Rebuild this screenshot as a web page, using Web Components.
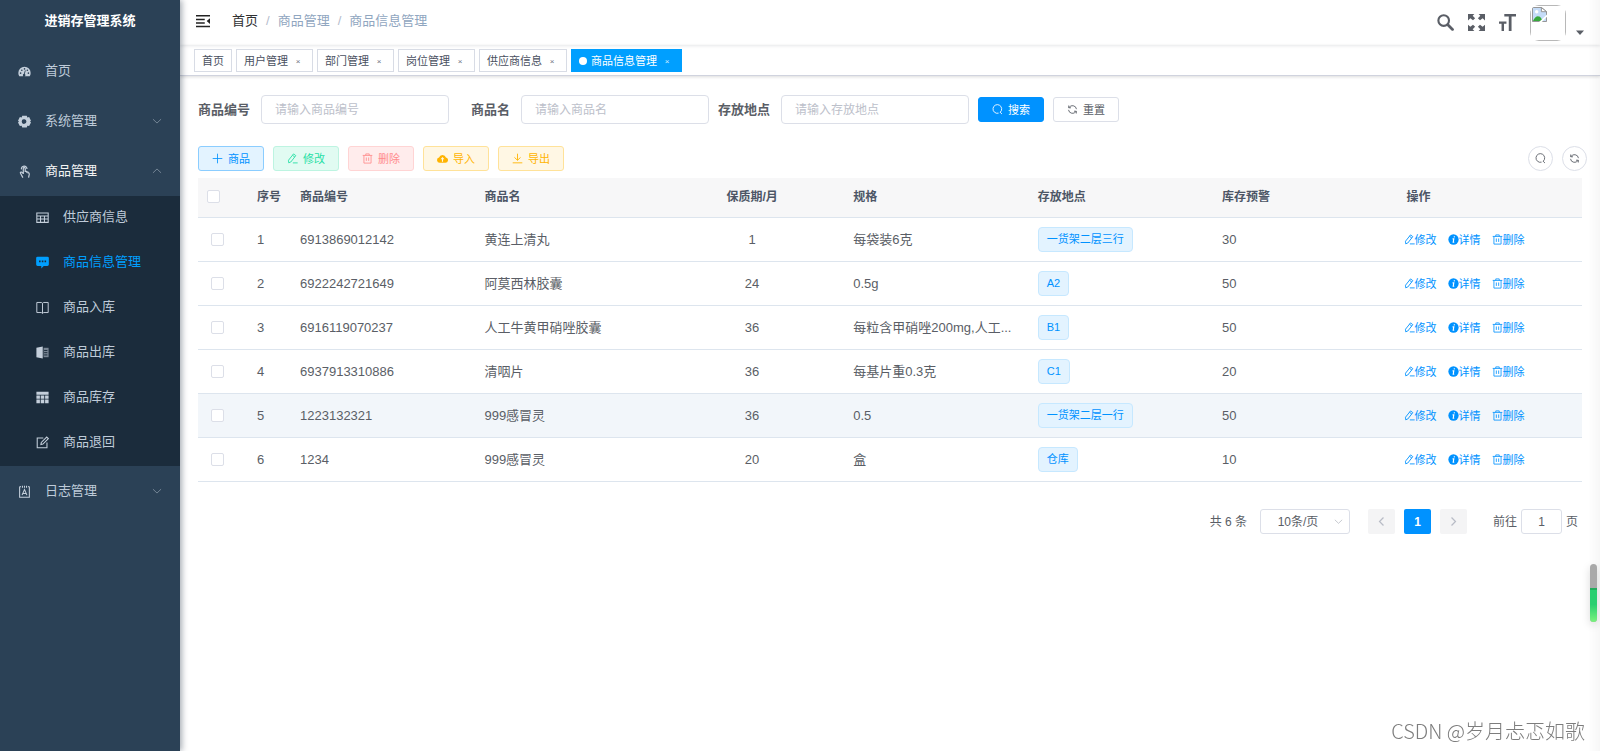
<!DOCTYPE html>
<html lang="zh-CN">
<head>
<meta charset="utf-8">
<title>进销存管理系统</title>
<style>
  html, body { margin: 0; background: #fff; }
  body {
    font: 13px/20px "Liberation Sans", "Noto Sans CJK SC", sans-serif;
    color: #5a5e66;
    --primary: #0092ff;
    --line: #dcdfe8;
  }
</style>
</head>
<body>
<stock-app></stock-app>

<script>
const ICONS = {
  dashboard: '<path fill="currentColor" d="M8 2.2A7.6 7.6 0 0 0 .4 9.8c0 1.5.4 2.900 1.200 4h12.800c.8-1.100 1.200-2.500 1.200-4A7.600 7.600 0 0 0 8 2.200zM3.200 11a1 1 0 1 1 0-2 1 1 0 0 1 0 2zm1.500-3.500a1 1 0 1 1 0-2 1 1 0 0 1 0 2zM8 3.800a1 1 0 1 1 0 2 1 1 0 0 1 0-2zm1.200 8.800a1.600 1.600 0 1 1-1.900-1.800l1.300-4.300.9.300-1.200 4.300c.6.300.900.900.900 1.500zM12.800 11a1 1 0 1 1 0-2 1 1 0 0 1 0 2zm-1.300-3.500a1 1 0 1 1 0-2 1 1 0 0 1 0 2z"/>',
  gear: '<path fill="currentColor" fill-rule="evenodd" d="M5.200.8h5.600l.7 2.200 2.200-.4L16 7l-1.200 1L16 9.200l-2.300 4.400-2.200-.5-.7 2.200H5.200l-.7-2.200-2.200.5L0 9.200 1.200 8 0 7l2.300-4.400 2.200.4zM8 5.200a2.900 2.900 0 1 0 0 5.700 2.900 2.900 0 0 0 0-5.700z"/>',
  hand: '<g fill="none" stroke="currentColor" stroke-width="1.500"><path d="M6.500 11V4.200a1.200 1.200 0 0 1 2.400 0V8.500M8.900 7.500l1.800.5v1.500M10.700 8.500l1.800.5v1.500M12.500 9.500c1 .2 1.500.8 1.400 1.800L13 15.500M6.500 10.500 4.400 8.800c-.9-.5-1.900.5-1.300 1.400L6 15.500"/><path d="M4.300 5.500A3.400 3.400 0 1 1 11 5"/></g>',
  grid: '<g fill="none" stroke="currentColor" stroke-width="1.300"><path d="M1 2.500h14v11.500H1zM1 6.200h14M1 9.900h14M5.600 6.200V14M10.400 6.200V14"/></g>',
  chat: '<path fill="currentColor" fill-rule="evenodd" d="M2 .8h12A1.800 1.800 0 0 1 15.800 2.600v8A1.800 1.800 0 0 1 14 12.400H9.500L6.500 15.500V12.400H2A1.800 1.800 0 0 1 .2 10.600v-8A1.800 1.800 0 0 1 2 .8zM3.700 5.600v2h2v-2zm3.400 0v2h2v-2zm3.400 0v2h2v-2z"/>',
  book: '<path fill="none" stroke="currentColor" stroke-width="1.200" d="M1 1.800h5.500L8 2.800l1.500-1H15v12.400H9.500l-1.500 1-1.500-1H1zM8 2.800v12.400"/>',
  notebook: '<path fill="currentColor" d="M.5 2.200 8.300.5v15L.5 13.800z"/><path fill="currentColor" opacity=".55" d="M9.300 2.200h6.200v11.600H9.300z"/><path stroke="#1b2c3c" stroke-width="1.200" d="M10 5.500h4M10 8.200h4M10 11h4"/>',
  sheet: '<path fill="currentColor" d="M.5 1h15v3.500H.5zM.5 5.500h4.300v4H.5zM5.800 5.500h4.400v4H5.800zM11.200 5.500h4.300v4h-4.300zM.5 10.500h4.300V15H.5zM5.800 10.500h4.400V15H5.800zM11.200 10.500h4.300V15h-4.300z"/>',
  compose: '<g fill="none" stroke="currentColor" stroke-width="1.300"><path d="M9 2.500H1.500v12h12V8"/><path d="M6 10.500 6.500 8l6.700-6.700 2 2L8.500 10z"/></g>',
  log: '<g fill="none" stroke="currentColor" stroke-width="1.300"><path d="M2 2v13h12V2M2 2h1.500M5.500 1v2.500M8 1v2.500M10.500 1v2.500M12.500 2H14M5 12.500l3-7 3 7M6 10.500h4"/></g>',
  down: '<path fill="none" stroke="currentColor" stroke-width="1.300" d="m1.500 5 6.500 6.300L14.500 5"/>',
  up: '<path fill="none" stroke="currentColor" stroke-width="1.300" d="M1.500 11 8 4.700 14.500 11"/>',
  prev: '<path fill="none" stroke="currentColor" stroke-width="2.200" d="M11.500 1 4.500 8l7 7"/>',
  next: '<path fill="none" stroke="currentColor" stroke-width="2.200" d="m4.500 1 7 7-7 7"/>',
  fold: '<path fill="currentColor" d="M0 1h16v1.800H0zM0 5.300h10V7H0zM0 9.300h10V11H0zM0 13.300h16V15H0zM16 4.800v6.700L12.200 8.100z"/>',
  find: '<g fill="none" stroke="currentColor"><circle cx="6.300" cy="6.200" r="5" stroke-width="2"/><path stroke-width="2.600" stroke-linecap="round" d="m10.400 10.300 4.200 4.200"/></g>',
  full: '<path fill="currentColor" d="M0 0h6L4.400 1.600l2.300 2.300-2 2L2.200 4 0 6zM16 0v6l-2.200-2-2.500 1.900-2-2 2.300-2.300L10 0zM0 16v-6l2.200 2 2.500-1.900 2 2-2.300 2.300L6 16zM16 16h-6l1.600-1.600-2.300-2.300 2-2 2.500 1.900 2.200-2z"/>',
  size: '<path fill="currentColor" d="M5 0h11v2.400h-4.200V16H9.200V2.400H5zM0 7h7v2.200H4.700V16H2.400V9.200H0z"/>',
  caret: '<path fill="currentColor" d="M0 3h16L8 12z"/>',
  search: '<path fill="none" stroke="currentColor" stroke-width="1.300" d="M11.900 12A6.300 6.300 0 1 0 9.500 13.300M11.700 11.800l2.800 2.800"/>',
  refresh: '<g fill="none" stroke="currentColor" stroke-width="1.300"><path d="M2.500 5.500h3.300M2.500 5.500V2.200M2.600 5.500A6 6 0 0 1 13.800 7.500M13.500 10.500h-3.300M13.500 10.500v3.300M13.400 10.500A6 6 0 0 1 2.200 8.500"/></g>',
  plus: '<path stroke="currentColor" stroke-width="1.200" d="M8 1v14M1 8h14"/>',
  edit: '<path fill="none" stroke="currentColor" stroke-width="1.300" d="M2.500 14.300 2.200 10.500 9.500 1.300l3.300 2.500-7.300 9.300zM8 3.300l3.300 2.500M8.500 14.400h7"/>',
  trash: '<path fill="none" stroke="currentColor" stroke-width="1.200" d="M1 3.500h14M5.500 3.500V1.300h5v2.200M2.800 3.500v11.200h10.400V3.500M6.300 6.500v5M9.700 6.500v5"/>',
  cloud: '<path fill="currentColor" fill-rule="evenodd" d="M4 14.200A3.800 3.800 0 0 1 3 6.700a5.200 5.200 0 0 1 10-.2A3.900 3.900 0 0 1 12 14.200zM7.200 12.700h1.600V9h2L8 5.800 5.200 9h2z"/>',
  download: '<path fill="none" stroke="currentColor" stroke-width="1.300" d="M8 1v9.500M3.500 6.300 8 10.600l4.500-4.300M1 14.300h14"/>',
  info: '<circle cx="8" cy="8" r="7.500" fill="currentColor"/><path fill="none" stroke="#fff" stroke-width="1.700" d="M9.300 3.300 9 5M6.600 7h1.800L7.600 12h1.500"/>',
  broken: '<path fill="#c5dcf8" stroke="#8e8e8e" d="M.5.500h9.500l5.500 4.500v10.500H.5z"/><path fill="#fff" stroke="#8e8e8e" d="M10 .5V5h5.500z"/><circle cx="5" cy="5" r="1.800" fill="#fff"/><path fill="#38a93c" d="M1 15c2-5 5-6 7.500-4.500L12 15z"/><path fill="#fff" d="m7.500 16 8.500-8v2.500L10.500 16z"/>'
};

/* Registers an element whose open shadow root is cloned from the given markup. */
function define(name, markup, ready) {
  const template = document.createElement('template');
  template.innerHTML = markup;
  customElements.define(name, class extends HTMLElement {
    constructor() {
      super();
      this.attachShadow({ mode: 'open' }).append(template.content.cloneNode(true));
    }
    connectedCallback() { if (ready) ready(this, this.shadowRoot); }
  });
}

define('app-icon', `
  <style>
    :host { display: inline-block; flex: none; width: 11px; height: 11px; }
    svg { display: block; width: 100%; height: 100%; }
  </style>
  <svg viewBox="0 0 16 16" aria-hidden="true"></svg>`,
  (el, root) => { root.querySelector('svg').innerHTML = ICONS[el.getAttribute('name')] || ''; });

/* ---------- buttons ---------- */
define('ui-button', `
  <style>
    :host { display: block; --fg: #5a5e66; --bg: #fff; --edge: var(--line); }
    :host([kind=solid]) { --fg: #fff; --bg: var(--primary); --edge: var(--primary); }
    :host([kind=primary]) { --fg: var(--primary); --bg: #e3f3ff; --edge: #8bcdff; }
    :host([kind=success]) { --fg: #26dfa5; --bg: #e1fbf2; --edge: #bdf4e1; }
    :host([kind=danger]) { --fg: #ff8b8b; --bg: #ffecec; --edge: #ffd4d4; }
    :host([kind=warning]) { --fg: #ffb400; --bg: #fff7e4; --edge: #ffe299; }
    button {
      display: flex; align-items: center; gap: 5px; box-sizing: border-box; height: 25px;
      padding: 0 13px; border: 1px solid var(--edge); border-radius: 3px;
      background: var(--bg); color: var(--fg); font: inherit; font-size: 11px; line-height: 16px;
    }
    :host([round]) button { width: 25px; padding: 0; border-radius: 50%; justify-content: center; }
  </style>
  <button type="button"><app-icon></app-icon><slot></slot></button>`,
  (el, root) => {
    const icon = document.createElement('app-icon');
    icon.setAttribute('name', el.getAttribute('icon'));
    root.querySelector('app-icon').replaceWith(icon);
    if (el.title) root.querySelector('button').setAttribute('aria-label', el.title);
  });

/* ---------- sidebar ---------- */
define('menu-item', `
  <style>
    :host { display: block; color: #bfcbd9; }
    :host([open]) { color: #f4f4f5; }
    :host([active]) { color: #009fff; }
    a {
      display: flex; align-items: center; gap: 14px; box-sizing: border-box; height: 50px; padding: 0 18px;
      color: inherit; text-decoration: none;
    }
    :host([sub]) a { height: 45px; padding: 0 18px 3px 36px; }
    app-icon { width: 13px; height: 13px; color: #c4cfdb; }
    :host([active]) app-icon { color: inherit; }
    span { flex: 1; }
    .arrow { width: 10px; height: 10px; color: #8494a4; }
  </style>
  <a href="#"><span><slot></slot></span></a>`,
  (el, root) => {
    const link = root.querySelector('a');
    if (link.children.length > 1) return;
    const icon = document.createElement('app-icon');
    icon.setAttribute('name', el.getAttribute('icon'));
    link.prepend(icon);
    if (el.hasAttribute('arrow')) {
      const arrow = document.createElement('app-icon');
      arrow.className = 'arrow';
      arrow.setAttribute('name', el.getAttribute('arrow'));
      link.append(arrow);
    }
  });

define('app-sidebar', `
  <style>
    :host {
      display: block; background: #2b4156; box-shadow: 2px 0 6px rgba(0, 21, 41, .35);
      position: relative; z-index: 2;
    }
    h1 { margin: 0; font-size: 13px; line-height: 42px; height: 46px; color: #fff; text-align: center; }
    .sub { background: #1b2c3c; }
  </style>
  <h1>进销存管理系统</h1>
  <nav>
    <menu-item icon="dashboard">首页</menu-item>
    <menu-item icon="gear" arrow="down">系统管理</menu-item>
    <menu-item icon="hand" arrow="up" open>商品管理</menu-item>
    <div class="sub">
      <menu-item sub icon="grid">供应商信息</menu-item>
      <menu-item sub icon="chat" active>商品信息管理</menu-item>
      <menu-item sub icon="book">商品入库</menu-item>
      <menu-item sub icon="notebook">商品出库</menu-item>
      <menu-item sub icon="sheet">商品库存</menu-item>
      <menu-item sub icon="compose">商品退回</menu-item>
    </div>
    <menu-item icon="log" arrow="down">日志管理</menu-item>
  </nav>`);

/* ---------- top bar ---------- */
define('app-navbar', `
  <style>
    :host {
      display: flex; align-items: center; height: 45px; padding: 0 16px; box-sizing: border-box;
      box-shadow: 0 1px 3px rgba(0, 21, 41, .1);
    }
    button { display: flex; padding: 0; border: 0; background: none; color: #5a5e66; }
    .fold { color: #222; margin-right: 22px; padding-bottom: 3px; }
    .fold app-icon { width: 14px; height: 14px; }
    .crumbs { display: flex; gap: 8px; flex: 1; padding-bottom: 3px; color: #90a6c0; }
    .crumbs a { color: #303133; text-decoration: none; }
    .crumbs i { font-style: normal; color: #b4bccc; }
    .tools { display: flex; align-items: center; gap: 14px; }
    .tool app-icon { width: 17px; height: 17px; }
    .user { align-items: flex-end; gap: 10px; }
    .avatar { width: 36px; height: 36px; border-radius: 9px; overflow: hidden; }
    .avatar div { box-sizing: border-box; height: 100%; border: 1px solid #b8b8b8; padding: 1px; }
    .avatar app-icon { display: block; width: 15px; height: 15px; }
    .caret { width: 8px; height: 8px; margin-bottom: 4px; }
  </style>
  <button class="fold" type="button" aria-label="收起菜单"><app-icon name="fold"></app-icon></button>
  <nav class="crumbs"><a href="#">首页</a><i>/</i><span>商品管理</span><i>/</i><span>商品信息管理</span></nav>
  <div class="tools">
    <button class="tool" type="button" aria-label="搜索"><app-icon name="find"></app-icon></button>
    <button class="tool" type="button" aria-label="全屏"><app-icon name="full"></app-icon></button>
    <button class="tool" type="button" aria-label="布局大小"><app-icon name="size"></app-icon></button>
    <button class="user" type="button" aria-label="用户">
      <span class="avatar"><div><app-icon name="broken"></app-icon></div></span>
      <app-icon class="caret" name="caret"></app-icon>
    </button>
  </div>`);

define('view-tab', `
  <style>
    :host {
      display: flex; align-items: center; box-sizing: border-box; height: 23px; padding: 0 7px;
      border: 1px solid #d8dce5; background: #fff; color: #495060; font-size: 11px; line-height: 16px;
    }
    :host([active]) { background: #009fff; border-color: #009fff; color: #fff; }
    a { color: inherit; text-decoration: none; }
    .dot { display: none; width: 8px; height: 8px; margin-right: 4px; border-radius: 50%; background: #fff; }
    :host([active]) .dot { display: block; }
    button {
      width: 14px; margin-left: 3px; padding: 2px 0 0; border: 0; background: none;
      font: 8px/14px "Liberation Sans", sans-serif; color: inherit; opacity: .8;
    }
    :host([fixed]) button { display: none; }
  </style>
  <span class="dot"></span><a href="#"><slot></slot></a><button type="button" aria-label="关闭">×</button>`);

define('app-tabs', `
  <style>
    :host {
      display: flex; gap: 4px; height: 31px; padding: 4px 14px 0; box-sizing: border-box;
      border-bottom: 1px solid #d0d3de; box-shadow: 0 1px 3px rgba(0, 0, 0, .14);
    }
  </style>
  <view-tab fixed>首页</view-tab>
  <view-tab>用户管理</view-tab>
  <view-tab>部门管理</view-tab>
  <view-tab>岗位管理</view-tab>
  <view-tab>供应商信息</view-tab>
  <view-tab active>商品信息管理</view-tab>`);

/* ---------- search form ---------- */
define('form-field', `
  <style>
    :host { display: flex; align-items: center; }
    label {
      width: 63px; box-sizing: border-box; padding-right: 11px;
      text-align: right; font-weight: bold; white-space: nowrap;
    }
    input {
      width: 188px; height: 29px; box-sizing: border-box; padding: 0 13px; min-width: 0;
      border: 1px solid var(--line); border-radius: 4px; background: #fff;
      font: inherit; font-size: 12px; color: #5a5e66; outline: 0;
    }
    input::placeholder { color: #bcc0ca; opacity: 1; }
  </style>
  <label for="field"></label><input id="field" type="text">`,
  (el, root) => {
    const text = el.getAttribute('label');
    root.querySelector('label').textContent = text;
    root.querySelector('input').placeholder = '请输入' + text;
  });

define('search-form', `
  <style>:host, form { display: flex; flex-wrap: wrap; align-items: center; gap: 9px; }</style>
  <form>
    <form-field label="商品编号"></form-field>
    <form-field label="商品名"></form-field>
    <form-field label="存放地点"></form-field>
    <ui-button kind="solid" icon="search">搜索</ui-button>
    <ui-button icon="refresh">重置</ui-button>
  </form>`);

define('app-toolbar', `
  <style>
    :host { display: flex; align-items: center; gap: 9px; margin-right: -5px; }
    .space { flex: 1; }
  </style>
  <ui-button kind="primary" icon="plus">商品</ui-button>
  <ui-button kind="success" icon="edit">修改</ui-button>
  <ui-button kind="danger" icon="trash">删除</ui-button>
  <ui-button kind="warning" icon="cloud">导入</ui-button>
  <ui-button kind="warning" icon="download">导出</ui-button>
  <span class="space"></span>
  <ui-button round icon="search" title="隐藏搜索"></ui-button>
  <ui-button round icon="refresh" title="刷新"></ui-button>`);

/* ---------- table ---------- */
const GOODS = [
  ['6913869012142', '黄连上清丸', '1', '每袋装6克', '一货架二层三行', '30'],
  ['6922242721649', '阿莫西林胶囊', '24', '0.5g', 'A2', '50'],
  ['6916119070237', '人工牛黄甲硝唑胶囊', '36', '每粒含甲硝唑200mg,人工...', 'B1', '50'],
  ['6937913310886', '清咽片', '36', '每基片重0.3克', 'C1', '20'],
  ['1223132321', '999感冒灵', '36', '0.5', '一货架二层一行', '50'],
  ['1234', '999感冒灵', '20', '盒', '仓库', '10']
];

define('goods-table', `
  <style>
    :host { display: block; }
    table { width: 100%; table-layout: fixed; border-collapse: separate; border-spacing: 0; }
    .check { width: 50px; }
    .index { width: 43px; }
    th, td {
      box-sizing: border-box; padding: 0 9px; border-bottom: 1px solid #dde5ee;
      text-align: left; white-space: nowrap; overflow: hidden; text-overflow: ellipsis;
    }
    th { height: 40px; background: #f7f7f8; color: #4d5666; font-size: 12px; line-height: 20px; padding-bottom: 2px; }
    td { height: 44px; }
    td:first-child { padding-left: 13px; }
    .center { text-align: center; }
    .current td { background: #f2f6fa; }
    input {
      appearance: none; display: block; width: 13px; height: 13px; box-sizing: border-box; margin: 0;
      border: 1px solid var(--line); border-radius: 2px; background: #fff;
    }
    .tag {
      display: inline-block; box-sizing: border-box; height: 25px; padding: 0 8px; vertical-align: middle;
      border: 1px solid #c6e8ff; border-radius: 4px; background: #e3f3ff; color: var(--primary);
      font-size: 11px; line-height: 23px;
    }
    .ops { display: flex; gap: 11px; margin-left: -3px; font-size: 11px; line-height: 16px; }
    .ops button {
      display: flex; align-items: center; padding: 0; border: 0; background: none;
      font: inherit; color: var(--primary);
    }
  </style>
  <table>
    <thead><tr>
      <th class="check"><input type="checkbox" aria-label="全选"></th><th class="index">序号</th>
      <th>商品编号</th><th>商品名</th><th class="center">保质期/月</th><th>规格</th>
      <th>存放地点</th><th>库存预警</th><th>操作</th>
    </tr></thead>
    <tbody></tbody>
  </table>`,
  (el, root) => {
    root.querySelector('tbody').innerHTML = GOODS.map(([code, name, months, spec, place, stock], i) => `
      <tr class="${i === 4 ? 'current' : ''}">
        <td><input type="checkbox" aria-label="${name}"></td><td>${i + 1}</td>
        <td>${code}</td><td>${name}</td><td class="center">${months}</td><td>${spec}</td>
        <td><span class="tag">${place}</span></td><td>${stock}</td>
        <td><div class="ops">
          <button type="button"><app-icon name="edit"></app-icon>修改</button>
          <button type="button"><app-icon name="info"></app-icon>详情</button>
          <button type="button"><app-icon name="trash"></app-icon>删除</button>
        </div></td>
      </tr>`).join('');
  });

/* ---------- pagination ---------- */
define('page-bar', `
  <style>
    :host { display: flex; justify-content: flex-end; align-items: center; font-size: 12px; padding-right: 4px; }
    select, input, button { box-sizing: border-box; height: 25px; font: inherit; color: #5a5e66; margin: 0; outline: 0; }
    select, input { border: 1px solid var(--line); border-radius: 3px; background: #fff; }
    .size { position: relative; margin: 0 18px 0 13px; }
    select { appearance: none; display: block; width: 90px; padding: 0 22px 0 8px; text-align-last: center; }
    .size app-icon { position: absolute; right: 7px; top: 8px; width: 9px; height: 9px; color: #b4b8c0; pointer-events: none; }
    .pages { display: flex; gap: 9px; margin-right: 26px; }
    .pages button {
      display: flex; align-items: center; justify-content: center; width: 27px; padding: 0;
      border: 0; border-radius: 2px; background: #f4f4f5; color: #b8bcc6; font-weight: bold;
    }
    .pages .on { background: var(--primary); color: #fff; }
    .pages app-icon { width: 9px; height: 9px; }
    label { display: flex; align-items: center; gap: 4px; }
    input { width: 41px; padding: 0 3px; text-align: center; }
  </style>
  <span>共 6 条</span>
  <div class="size">
    <select aria-label="每页条数"><option>10条/页</option></select>
    <app-icon name="down"></app-icon>
  </div>
  <div class="pages">
    <button type="button" aria-label="上一页"><app-icon name="prev"></app-icon></button>
    <button type="button" class="on">1</button>
    <button type="button" aria-label="下一页"><app-icon name="next"></app-icon></button>
  </div>
  <label>前往 <input type="text" value="1"> 页</label>`);

/* ---------- overlays ---------- */
define('speed-gauge', `
  <style>
    :host {
      position: fixed; right: 3px; bottom: 129px; width: 7px; height: 58px; z-index: 3; overflow: hidden;
      border-radius: 4px; background: #a9a9a9;
      box-shadow: 0 3px 8px rgba(0, 0, 0, .15);
      display: flex; align-items: flex-end;
    }
    i { flex: 1; height: 34px; border-top: 2px solid #21ac5c; box-sizing: border-box; background: linear-gradient(#29cf70 45%, #7bf27e); }
  </style><i></i>`);

define('water-mark', `
  <style>
    :host {
      position: fixed; right: 15px; bottom: 6px; z-index: 3;
      font: 300 20px/28px "Noto Sans CJK SC", sans-serif; color: #7d7d7d;
    }
  </style><slot></slot>`);

define('stock-app', `
  <style>
    :host { display: grid; grid-template-columns: 180px minmax(0, 1fr); min-height: 100vh; }
    .edge { position: fixed; top: 0; right: 0; bottom: 0; width: 12px; background: linear-gradient(90deg, transparent, rgba(0, 0, 0, .03)); }
    section { display: flex; flex-direction: column; padding: 19px 18px; }
    app-toolbar { margin-top: 22px; }
    goods-table { margin-top: 7px; }
    page-bar { margin-top: 27px; }
  </style>
  <app-sidebar></app-sidebar>
  <main>
    <app-navbar></app-navbar>
    <app-tabs></app-tabs>
    <section>
      <search-form></search-form>
      <app-toolbar></app-toolbar>
      <goods-table></goods-table>
      <page-bar></page-bar>
    </section>
  </main>
  <div class="edge"></div>
  <speed-gauge></speed-gauge>
  <water-mark>CSDN @岁月忐忑如歌</water-mark>`);
</script>
</body>
</html>
